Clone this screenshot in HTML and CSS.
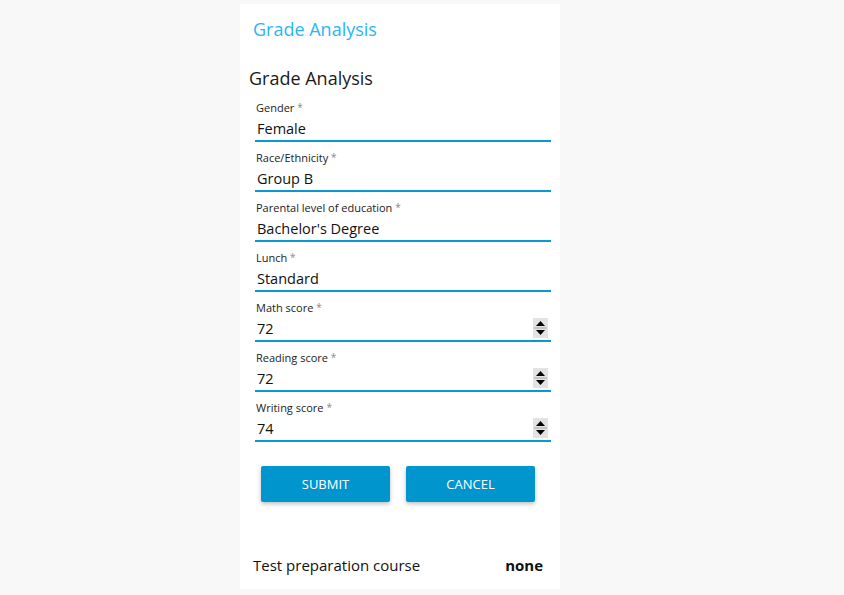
FILE: index.html
```html
<!DOCTYPE html>
<html>
<head>
<meta charset="utf-8">
<title>Grade Analysis</title>
<link rel="stylesheet" href="styles.css">
</head>
<body>
<div class="panel">
  <div class="app-title">Grade Analysis</div>
  <div class="form">
    <h2 class="form-title">Grade Analysis</h2>
    <div class="field">
      <label class="label">Gender <span class="req">*</span></label>
      <div class="control"><span class="value">Female</span></div>
    </div>
    <div class="field">
      <label class="label">Race/Ethnicity <span class="req">*</span></label>
      <div class="control"><span class="value">Group B</span></div>
    </div>
    <div class="field">
      <label class="label">Parental level of education <span class="req">*</span></label>
      <div class="control"><span class="value">Bachelor's Degree</span></div>
    </div>
    <div class="field">
      <label class="label">Lunch <span class="req">*</span></label>
      <div class="control"><span class="value">Standard</span></div>
    </div>
    <div class="field">
      <label class="label">Math score <span class="req">*</span></label>
      <div class="control"><span class="value">72</span>
        <span class="spin"><svg width="15" height="20" viewBox="0 0 15 20"><rect x="0" y="0" width="15" height="20" fill="#e3e3e3"/><rect x="1" y="9.5" width="13" height="1" fill="#aaa"/><path d="M3 8 L7.5 3 L12 8 Z" fill="#000"/><path d="M3 12 L7.5 17 L12 12 Z" fill="#000"/></svg></span>
      </div>
    </div>
    <div class="field">
      <label class="label">Reading score <span class="req">*</span></label>
      <div class="control"><span class="value">72</span>
        <span class="spin"><svg width="15" height="20" viewBox="0 0 15 20"><rect x="0" y="0" width="15" height="20" fill="#e3e3e3"/><rect x="1" y="9.5" width="13" height="1" fill="#aaa"/><path d="M3 8 L7.5 3 L12 8 Z" fill="#000"/><path d="M3 12 L7.5 17 L12 12 Z" fill="#000"/></svg></span>
      </div>
    </div>
    <div class="field">
      <label class="label">Writing score <span class="req">*</span></label>
      <div class="control"><span class="value">74</span>
        <span class="spin"><svg width="15" height="20" viewBox="0 0 15 20"><rect x="0" y="0" width="15" height="20" fill="#e3e3e3"/><rect x="1" y="9.5" width="13" height="1" fill="#aaa"/><path d="M3 8 L7.5 3 L12 8 Z" fill="#000"/><path d="M3 12 L7.5 17 L12 12 Z" fill="#000"/></svg></span>
      </div>
    </div>
    <div class="actions">
      <button class="btn">SUBMIT</button>
      <button class="btn">CANCEL</button>
    </div>
  </div>
  <div class="result">
    <span class="result-label">Test preparation course</span>
    <span class="result-value">none</span>
  </div>
</div>
</body>
</html>
```
FILE: styles.css
```css
html, body {
  margin: 0;
  padding: 0;
  background: #f8f8f8;
}
body {
  font-family: "Open Sans", "Noto Sans", sans-serif;
  color: #1a1a1a;
  height: 595px;
  overflow: hidden;
}
.panel {
  margin: 4px 0 0 240px;
  width: 320px;
  height: 585px;
  background: #ffffff;
  display: flex;
  flex-direction: column;
}
.app-title {
  color: #29b6f6;
  font-size: 18px;
  line-height: 24px;
  padding: 13px 0 0 13px;
}
.form {
  display: flex;
  flex-direction: column;
  padding: 0 9px 0 9px;
}
.form-title {
  margin: 0 0 1px 0;
  font-weight: 400;
  font-size: 18px;
  line-height: 26px;
  padding-top: 24px;
  color: #1a1a1a;
}
.field {
  display: flex;
  flex-direction: column;
  margin-left: 6px;
  height: 50px;
  padding-top: 8px;
  border-bottom: 2px solid #0a98d2;
  box-sizing: border-box;
}
.label {
  font-size: 11px;
  line-height: 15px;
  padding-left: 1px;
  color: #222;
}
.req {
  color: #888;
  font-size: 10px;
  vertical-align: 1px;
}
.control {
  display: flex;
  align-items: center;
  justify-content: space-between;
  height: 25px;
}
.value {
  font-size: 14.5px;
  padding-left: 2px;
  margin-top: 2px;
  color: #111;
}
.spin {
  display: flex;
  margin-right: 3px;
}
.actions {
  display: flex;
  gap: 16px;
  padding: 24px 0 0 12px;
}
.btn {
  width: 129px;
  height: 36px;
  border: none;
  border-radius: 2px;
  background: #0096cd;
  color: #ffffff;
  font-family: "Open Sans", "Noto Sans", sans-serif;
  font-size: 13px;
  box-shadow: 0 2px 4px rgba(0,0,0,0.25);
  padding: 0;
}
.result {
  margin-top: auto;
  display: flex;
  justify-content: space-between;
  align-items: center;
  padding: 0 17px 14px 13px;
  font-size: 15px;
  color: #111;
}
.result-value {
  font-weight: 700;
}
```
